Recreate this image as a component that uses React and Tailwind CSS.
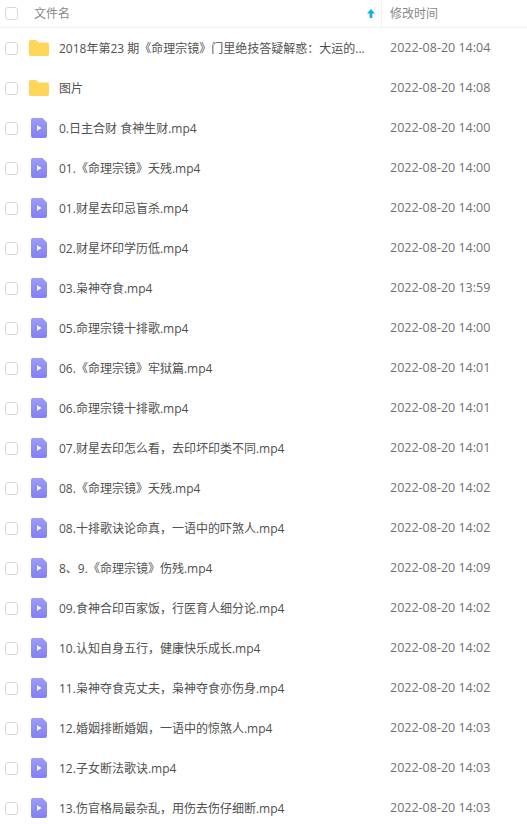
import React from "react";

const rows = [
  ["folder", "2018年第23 期《命理宗镜》门里绝技答疑解惑：大运的...", "2022-08-20 14:04"],
  ["folder", "图片", "2022-08-20 14:08"],
  ["video", "0.日主合财 食神生财.mp4", "2022-08-20 14:00"],
  ["video", "01.《命理宗镜》夭残.mp4", "2022-08-20 14:00"],
  ["video", "01.财星去印忌盲杀.mp4", "2022-08-20 14:00"],
  ["video", "02.财星坏印学历低.mp4", "2022-08-20 14:00"],
  ["video", "03.枭神夺食.mp4", "2022-08-20 13:59"],
  ["video", "05.命理宗镜十排歌.mp4", "2022-08-20 14:00"],
  ["video", "06.《命理宗镜》牢狱篇.mp4", "2022-08-20 14:01"],
  ["video", "06.命理宗镜十排歌.mp4", "2022-08-20 14:01"],
  ["video", "07.财星去印怎么看，去印坏印类不同.mp4", "2022-08-20 14:01"],
  ["video", "08.《命理宗镜》夭残.mp4", "2022-08-20 14:02"],
  ["video", "08.十排歌诀论命真，一语中的吓煞人.mp4", "2022-08-20 14:02"],
  ["video", "8、9.《命理宗镜》伤残.mp4", "2022-08-20 14:09"],
  ["video", "09.食神合印百家饭，行医育人细分论.mp4", "2022-08-20 14:02"],
  ["video", "10.认知自身五行，健康快乐成长.mp4", "2022-08-20 14:02"],
  ["video", "11.枭神夺食克丈夫，枭神夺食亦伤身.mp4", "2022-08-20 14:02"],
  ["video", "12.婚姻排断婚姻，一语中的惊煞人.mp4", "2022-08-20 14:03"],
  ["video", "12.子女断法歌诀.mp4", "2022-08-20 14:03"],
  ["video", "13.伤官格局最杂乱，用伤去伤仔细断.mp4", "2022-08-20 14:03"],
];

function Check() {
  return <span className="block w-[13px] h-[13px] shrink-0 rounded-[3px] border border-[#d8d8d8] bg-white" />;
}

function FolderIcon() {
  return (
    <svg width="20" height="16" viewBox="0 0 20 16" className="block">
      <path d="M0 2a2 2 0 0 1 2-2h5l2.5 2.4H18a2 2 0 0 1 2 2V14a2 2 0 0 1-2 2H2a2 2 0 0 1-2-2z" fill="#ffd659" />
    </svg>
  );
}

function VideoIcon() {
  return (
    <svg width="16" height="20" viewBox="0 0 16 20" className="block">
      <defs>
        <linearGradient id="vid" x1="0" y1="0" x2="0" y2="1">
          <stop offset="0" stopColor="#9c9bfb" />
          <stop offset="1" stopColor="#8381f4" />
        </linearGradient>
      </defs>
      <path d="M2 0h9.5L16 4.5V18a2 2 0 0 1-2 2H2a2 2 0 0 1-2-2V2a2 2 0 0 1 2-2z" fill="url(#vid)" />
      <path d="M6 7.2v5.6l4.6-2.8z" fill="#fff" />
    </svg>
  );
}

export default function App() {
  return (
    <div className="w-[527px] h-[824px] overflow-hidden bg-white font-['Open_Sans','Noto_Sans_CJK_SC',sans-serif] text-[12px]">
      <div className="flex h-[28px] items-center border-b border-[#f2f2f2] text-[#888]">
        <div className="pl-[5px] w-[34px]">
          <Check />
        </div>
        <div className="flex-1 flex items-center justify-between pr-[6px] h-full">
          <span>文件名</span>
          <svg width="8" height="9" viewBox="0 0 8 9" className="block">
            <path d="M4 0 8 4.6H5.3V9H2.7V4.6H0z" fill="#09aaff" />
          </svg>
        </div>
        <div className="w-[146px] h-full flex items-center pl-[8px] border-l border-[#f0f0f0]">修改时间</div>
      </div>
      {rows.map(([kind, name, time], i) => (
        <div key={i} className="flex h-[40px] items-center pt-[1px]">
          <div className="pl-[5px] w-[29px]">
            <Check />
          </div>
          <div className="w-[20px] mr-[10px] flex justify-center -mt-[2px]">
            {kind === "folder" ? <FolderIcon /> : <VideoIcon />}
          </div>
          <div className="flex-1 min-w-0 whitespace-nowrap text-[#505050]">{name}</div>
          <div className="w-[137px] text-[#707070] text-[12.5px] whitespace-nowrap">{time}</div>
        </div>
      ))}
    </div>
  );
}
